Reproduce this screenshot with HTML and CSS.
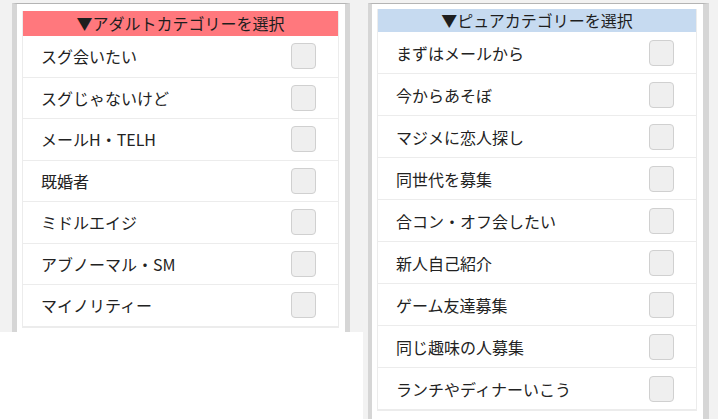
FILE: index.html
```html
<!DOCTYPE html>
<html lang="ja">
<head>
  <meta charset="UTF-8">
  <meta name="viewport" content="width=device-width, initial-scale=1.0">
  <title>カテゴリー選択</title>
  <link rel="stylesheet" href="styles.css">
</head>
<body>

  <div class="shot shot-adult">
    <div class="frame">
      <div class="list">
        <div class="list-head">▼アダルトカテゴリーを選択</div>
        <label class="row"><span>スグ会いたい</span><input type="checkbox"></label>
        <label class="row"><span>スグじゃないけど</span><input type="checkbox"></label>
        <label class="row"><span>メールH・TELH</span><input type="checkbox"></label>
        <label class="row"><span>既婚者</span><input type="checkbox"></label>
        <label class="row"><span>ミドルエイジ</span><input type="checkbox"></label>
        <label class="row"><span>アブノーマル・SM</span><input type="checkbox"></label>
        <label class="row"><span>マイノリティー</span><input type="checkbox"></label>
      </div>
    </div>
  </div>

  <div class="shot shot-pure">
    <div class="frame">
      <div class="list">
        <div class="list-head">▼ピュアカテゴリーを選択</div>
        <label class="row"><span>まずはメールから</span><input type="checkbox"></label>
        <label class="row"><span>今からあそぼ</span><input type="checkbox"></label>
        <label class="row"><span>マジメに恋人探し</span><input type="checkbox"></label>
        <label class="row"><span>同世代を募集</span><input type="checkbox"></label>
        <label class="row"><span>合コン・オフ会したい</span><input type="checkbox"></label>
        <label class="row"><span>新人自己紹介</span><input type="checkbox"></label>
        <label class="row"><span>ゲーム友達募集</span><input type="checkbox"></label>
        <label class="row"><span>同じ趣味の人募集</span><input type="checkbox"></label>
        <label class="row"><span>ランチやディナーいこう</span><input type="checkbox"></label>
      </div>
    </div>
  </div>

</body>
</html>
```

FILE: styles.css
```css
body {
  margin: 0;
  background-color: #fff;
  font-family: "Noto Sans CJK JP", "Noto Sans", sans-serif;
  color: #222;
  display: flex;
  align-items: flex-start;
}
.shot {
  display: flex;
  flex-direction: column;
  background-color: #f2f2f2;
  padding-top: 3px;
  box-sizing: border-box;
}
.shot-adult {
  width: 363px;
  height: 332px;
}
.shot-pure {
  width: 355px;
  height: 419px;
}
.frame {
  flex: 1;
  background-color: #fff;
  border-top: 1px solid #b4b4b4;
}
.shot-adult .frame {
  margin: 0 13px 0 12px;
  border-left: 5px solid #d6d6d6;
  border-right: 5px solid #d6d6d6;
  padding: 7px 6px 0 5px;
}
.shot-pure .frame {
  margin: 0 9px 0 5px;
  border-left: 4px solid #d6d6d6;
  border-right: 6px solid #d6d6d6;
  padding: 5px 6px 0 5px;
}
.list {
  border: 1px solid #ececec;
  border-top: none;
}
.list-head {
  text-align: center;
  font-size: 16px;
  color: #1e1e1e;
}
.shot-adult .list-head {
  background-color: #ff787d;
  height: 25px;
  line-height: 25px;
}
.shot-pure .list-head {
  background-color: #c6daf0;
  height: 23px;
  line-height: 23px;
}
.row {
  display: flex;
  align-items: center;
  justify-content: space-between;
  padding: 0 22px 0 18px;
  border-bottom: 1px solid #ececec;
  font-size: 16px;
  box-sizing: border-box;
}
.shot-adult .row {
  height: 41.5px;
}
.shot-pure .row {
  height: 42px;
}
.row input {
  appearance: none;
  margin: 0;
  width: 25px;
  height: 26px;
  background-color: #efefef;
  border: 1px solid #d0d0d0;
  border-radius: 4px;
}
```
